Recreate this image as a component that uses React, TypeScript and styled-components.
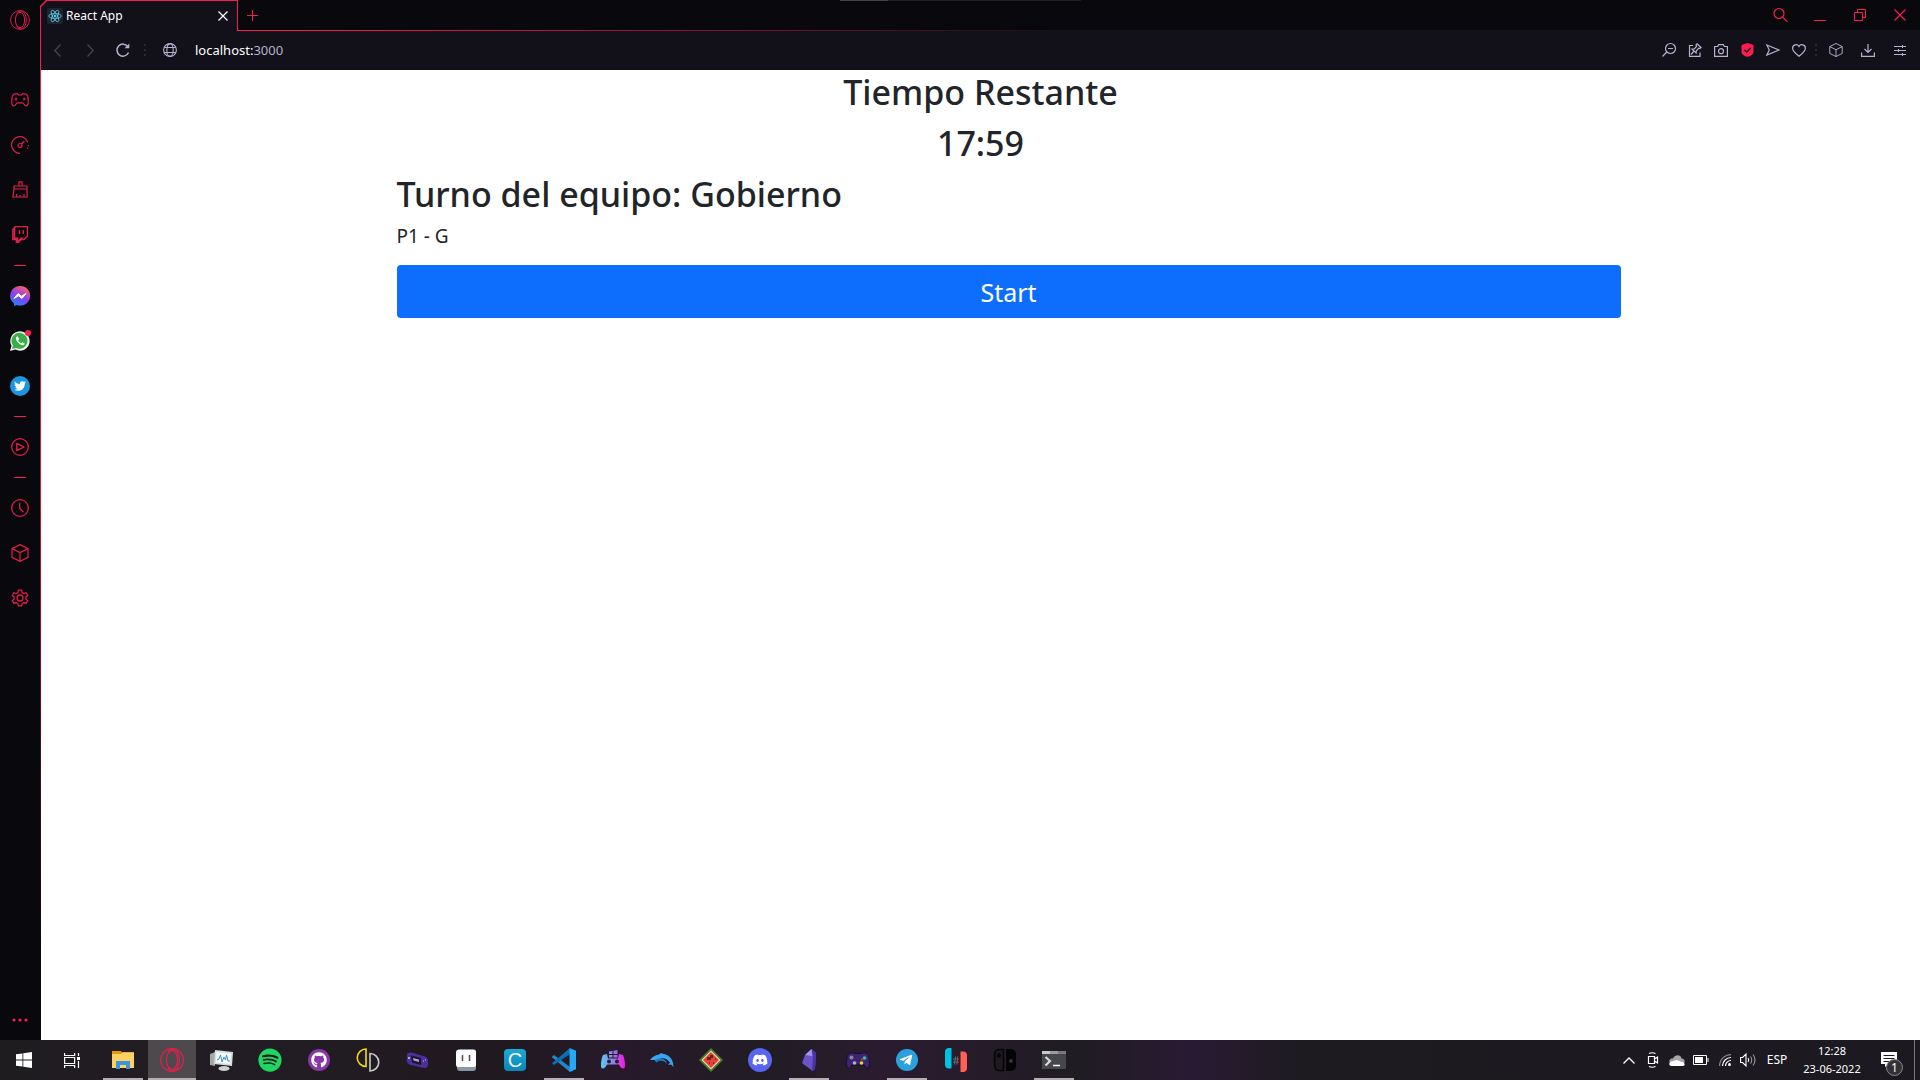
import React from "react";
import styled, { createGlobalStyle, css } from "styled-components";
import {
  FaSpotify,
  FaGithub,
  FaDiscord,
  FaTelegramPlane,
  FaTwitter,
} from "react-icons/fa";

const pink = "#fa1e4e";
const ink = "#09080c";
const panel = "#121019";
const lilac = "#b9b0cf";

const GlobalStyle = createGlobalStyle`
  * { box-sizing: border-box; }
  body { margin: 0; background: #fff; font-family: "Noto Sans", "Open Sans", sans-serif; }
  button, input { font-family: inherit; }
  svg { display: block; flex: none; overflow: visible; }
`;

const Desktop = styled.div`
  display: flex;
  flex-direction: column;
  min-height: 100vh;
`;

const Browser = styled.div`
  display: flex;
  flex: 1;
`;

const resetButton = css`
  display: flex;
  align-items: center;
  justify-content: center;
  flex: none;
  padding: 0;
  border: 0;
  background: none;
  color: inherit;
`;

/* ---------- sidebar ---------- */

const Sidebar = styled.nav`
  display: flex;
  flex-direction: column;
  width: 40px;
  background: ${ink};
  color: #e01f4a;
`;

const SideItem = styled.button`
  ${resetButton}
  width: 39px;
  height: 45px;
`;

const SideLogo = styled(SideItem)`
  height: 40px;
  margin-bottom: 37px;
`;

const SideMore = styled(SideItem)`
  height: 40px;
  margin-top: auto;
`;

const SideRule = styled.hr`
  width: 12px;
  height: 1px;
  margin: 8px auto 7px 14px;
  border: 0;
  background: ${pink};
`;

const Unread = styled.span`
  position: absolute;
  top: -1px;
  right: -1px;
  width: 6px;
  height: 6px;
  border-radius: 50%;
  background: ${pink};
`;

const Bubble = styled.span<{ $bg: string }>`
  position: relative;
  display: flex;
  align-items: center;
  justify-content: center;
  width: 20px;
  height: 20px;
  border-radius: 50%;
  background: ${(p) => p.$bg};
  color: #fff;
`;

/* ---------- browser window ---------- */

const Main = styled.div`
  display: flex;
  flex: 1;
  flex-direction: column;
  min-width: 0;
`;

const TabStrip = styled.header`
  position: relative;
  display: flex;
  height: 31px;
  background: ${ink};
`;

const TabFrame = styled.div`
  width: 198px;
  padding: 1px 1px 0;
  background: ${pink};
  clip-path: polygon(6px 0, 100% 0, 100% 100%, 0 100%, 0 6px);
`;

const Tab = styled.div`
  display: flex;
  align-items: center;
  gap: 3px;
  height: 30px;
  padding: 0 6px;
  background: ${panel};
  clip-path: polygon(6px 0, 100% 0, 100% 100%, 0 100%, 0 6px);
  color: #fff;
  font-size: 12px;
  line-height: 16px;
`;

const Favicon = styled.span`
  display: flex;
  align-items: center;
  justify-content: center;
  width: 16px;
  height: 16px;
  border-radius: 2px;
  background: #20232a;
`;

const TabTitle = styled.span`
  flex: 1;
`;

const IconButton = styled.button<{ $w?: number }>`
  ${resetButton}
  width: ${(p) => p.$w ?? 16}px;
  height: 30px;
`;

const StripRest = styled.div`
  display: flex;
  flex: 1;
  justify-content: space-between;
  padding-left: 5px;
  border-style: solid;
  border-width: 0 0 1px;
  border-image: linear-gradient(90deg, ${pink} 0, ${pink} 40px, ${panel} 50%) 1;
  color: ${pink};
`;

const Controls = styled.div`
  display: flex;
`;

const MediaBar = styled.span`
  position: absolute;
  top: 0;
  left: 50%;
  width: 241px;
  height: 1px;
  margin-left: -140px;
  background: linear-gradient(90deg, #444 48px, #1e1e1e 48px);
`;

const Body = styled.div`
  display: flex;
  flex: 1;
  flex-direction: column;
  border-style: solid;
  border-width: 0 0 0 1px;
  border-image: linear-gradient(180deg, ${pink} 0, #d01a42 45%, #540d20 70%, ${ink} 92%) 1;
`;

const Toolbar = styled.div`
  display: flex;
  align-items: center;
  height: 39px;
  padding: 0 3px 1px 0;
  background: ${panel};
  color: ${lilac};
`;

const Address = styled.label`
  display: flex;
  flex: 1;
  align-items: center;
  gap: 18px;
  padding-left: 17px;
`;

const UrlField = styled.span`
  display: grid;
  flex: 1;
  font-size: 13px;
  line-height: 20px;

  > * { grid-area: 1 / 1; }
`;

const UrlText = styled.span`
  color: ${lilac};
  pointer-events: none;
`;

const Host = styled.span`
  color: #fff;
`;

const UrlInput = styled.input`
  width: 100%;
  padding: 0;
  border: 0;
  outline: 0;
  background: none;
  color: ${lilac};
  font-size: 13px;
`;

const Dots = styled.span<{ $m: string }>`
  width: 2px;
  height: 12px;
  margin: ${(p) => p.$m};
  background: repeating-linear-gradient(#2b2740 0 2px, transparent 2px 5px);
`;

/* ---------- page ---------- */

const Page = styled.main`
  flex: 1;
  background: #fff;
  color: #212529;
`;

const Heading = styled.h2<{ $center?: boolean }>`
  margin: 0 0 6px;
  font-size: 34px;
  font-weight: 500;
  line-height: 45px;
  text-align: ${(p) => (p.$center ? "center" : "left")};
`;

const Container = styled.section`
  max-width: 1320px;
  margin: 0 auto;
  padding: 0 20px 0 76px;
`;

const Speaker = styled.p`
  margin: 0 0 16px;
  font-size: 19px;
  line-height: 26px;
`;

const StartButton = styled.button`
  width: 100%;
  height: 53px;
  padding: 1px 0 0;
  border: 0;
  border-radius: 4px;
  background: #0d6efd;
  color: #fff;
  font-size: 25px;
  line-height: 52px;
`;

/* ---------- taskbar ---------- */

const Taskbar = styled.footer`
  display: flex;
  height: 40px;
  background: linear-gradient(90deg, #1f1c20 0, #221d24 12%, #20191f 26%, #271a2b 32%, #211c24 40%, #2b1b30 46%, #1f1c22 56%, #291a33 62%, #1d1b20 68%, #1c1a20 100%);
  color: #fff;
`;

const Pins = styled.div`
  display: flex;
  gap: 1px;
  margin-left: 3px;
`;

const Task = styled.button<{ $open?: boolean; $active?: boolean }>`
  ${resetButton}
  position: relative;
  width: 48px;
  height: 40px;
  background: ${(p) => (p.$active ? "#4d494d" : "none")};

  &::after {
    content: "";
    position: absolute;
    bottom: 0;
    left: ${(p) => (p.$active ? 0 : 4)}px;
    right: ${(p) => (p.$active ? 0 : 4)}px;
    height: 2px;
    background: ${(p) => (p.$open || p.$active ? "#b5afb4" : "none")};
  }
`;

const CTile = styled.span`
  width: 22px;
  height: 22px;
  border-radius: 4px;
  background: linear-gradient(#1ba9d8, #0a86b8);
  color: #f2f2f2;
  font: 500 20px/22px "Liberation Sans", sans-serif;
  text-align: center;
`;

const Tray = styled.div`
  display: flex;
  align-items: center;
  margin-left: auto;
  font-size: 11px;
  line-height: 18px;
`;

const TrayButton = styled.button<{ $w?: number }>`
  ${resetButton}
  width: ${(p) => p.$w ?? 24}px;
  height: 40px;
  font-size: 12px;
  line-height: 18px;
`;

const Clock = styled.time`
  width: 74px;
  text-align: center;
`;

const NoticeWrap = styled(TrayButton)`
  position: relative;
`;

const Count = styled.span`
  position: absolute;
  top: 19px;
  left: 17px;
  width: 17px;
  height: 17px;
  border: 1px solid #8b898c;
  border-radius: 50%;
  background: #333135;
  color: #fff;
  font-size: 12px;
  line-height: 15px;
  text-align: center;
`;

const PeekDesktop = styled.button`
  ${resetButton}
  width: 6px;
  height: 40px;
  margin-left: 5px;
  border-left: 1px solid #77757a;
`;

/* ---------- drawings ---------- */

type LineProps = { w?: number; h?: number; box?: string; sw?: number; color?: string; children: React.ReactNode };

const Line = ({ w = 18, h = w, box, sw = 1, color = "currentColor", children }: LineProps) => (
  <svg width={w} height={h} viewBox={box ?? `0 0 ${w} ${h}`} fill="none" stroke={color} strokeWidth={sw} aria-hidden="true">
    {children}
  </svg>
);

const Opera = ({ size, color = "currentColor" }: { size: number; color?: string }) => (
  <Line w={size} box="0 0 20 20" color={color} sw={1}>
    <circle cx="10" cy="10" r="9.4" />
    <ellipse cx="10" cy="10" rx="4.6" ry="7.8" />
    <path d="M6.500 3.500C8.500.3 12.500.5 14.500 3.500c2.300 3.500 2.300 9.500 0 13-2 3-6 3.200-8 0" />
  </Line>
);

const Cube = ({ size }: { size: number }) => (
  <Line w={size} box="0 0 18 18" sw={1.2}>
    <path d="M9 .6 17 4.600v8.800l-8 4-8-4V4.600ZM1 4.600l8 4 8-4M9 8.600v8.800" />
  </Line>
);

const Search = () => (
  <Line w={15} sw={1.2}>
    <circle cx="6" cy="5.500" r="5" />
    <path d="m9.800 9.300 4.500 4.500" />
  </Line>
);

const ReactLogo = () => (
  <Line w={14} box="-7 -7 14 14" sw={0.8} color="#5ccfee">
    <ellipse rx="6.400" ry="2.400" />
    <ellipse rx="6.400" ry="2.400" transform="rotate(60)" />
    <ellipse rx="6.400" ry="2.400" transform="rotate(120)" />
    <circle r="1" fill="#5ccfee" />
  </Line>
);

const Globe = () => (
  <Line w={14} sw={1.1}>
    <circle cx="7" cy="7" r="6.400" />
    <ellipse cx="7" cy="7" rx="3.200" ry="6.400" />
    <path d="M1.400 4.500h11.200M1.400 9.500h11.200" />
  </Line>
);

const Gear = () => (
  <Line w={18} box="0 0 24 24" sw={1.7}>
    <circle cx="12" cy="12" r="4" />
    <path d="M9.800 1.500h4.400l.6 3.200 2.200 1.300 3.100-1.100 2.200 3.800-2.500 2.100v2.500l2.500 2.100-2.200 3.800-3.100-1.100-2.200 1.300-.6 3.200H9.800l-.6-3.200L7 18.100l-3.100 1.100-2.200-3.800 2.500-2.100v-2.500L1.700 8.700l2.200-3.800L7 6l2.200-1.300Z" />
  </Line>
);

const sideTop = [
  { label: "GX Corner", icon: (
    <Line w={18} h={14} sw={1.2}>
      <path d="M4 .8h2.500l1 1.200h3l1-1.200H14c2 0 3.300 3 3.300 7.500 0 3-.5 4.700-2.200 4.700-1.700 0-2.300-3.200-3.600-3.200h-5C5.200 9.800 4.600 13 2.900 13 1.200 13 .7 11.300.7 8.300.7 3.800 2 .8 4 .8Z" />
      <path d="M3.500 6h3M5 4.500v3M12 6h2.500M13.200 4.800v2.400" />
    </Line>) },
  { label: "GX Control", icon: (
    <Line w={18} sw={1.2}>
      <path d="M9 17.300A8.300 8.300 0 1 1 16.800 6.500" />
      <path d="M17.300 9a8 8 0 0 1-1 4" strokeDasharray="1.300 1.300" />
      <circle cx="9" cy="9.500" r="2" />
      <path d="m10.500 8 2.800-3" />
    </Line>) },
  { label: "GX Cleaner", icon: (
    <Line w={16} h={17} sw={1.2}>
      <path d="M7 5V.8h3V5M2 5h13v3H2ZM2 8 .8 16h14.400L15 8M4.500 16v-3M8 16v-2M12 16v-3" />
    </Line>) },
  { label: "Twitch", icon: (
    <Line w={16} h={17} sw={1.300}>
      <path d="M3.200.7h12.200v9.500l-3.400 3.300H9l-2.500 2.800H4.300v-2.800H.8V3.200Z" />
      <path d="M1.300 3.200 3.300 1v10.500h3v2.800l2.500-2.800H12l-3 2.200-2.500 2.600H4.300v-2.800h-3Z" fill="currentColor" stroke="none" />
      <path d="M7.500 4v4M11.300 4v4" />
    </Line>) },
];

const sideBottom = [
  { label: "History", icon: (
    <Line w={18} sw={1.300}>
      <circle cx="9" cy="9" r="8.300" />
      <path d="M8.700 4v5.300l3.600 3.700" />
    </Line>) },
  { label: "Extensions", icon: <Cube size={18} /> },
  { label: "Settings", icon: <Gear /> },
];

const toolIcons = [
  { label: "Zoom", w: 26, icon: (
    <Line w={14} sw={1.200}>
      <circle cx="8.500" cy="5.500" r="5" />
      <path d="M4.800 9 .5 13.500M6 5.500h5" />
    </Line>) },
  { label: "Edit page", w: 26, icon: (
    <Line w={14} sw={1.200}>
      <path d="M5 2.500H1.500v10.800h10.500V9.500M9 .8l4 3.700-1.200 1-1-.3-2.500 2.600-.2 2.200L4 6.200l2.200-.3L8.600 3.400 8 2ZM6 8l-3 3.500" />
    </Line>) },
  { label: "Snapshot", w: 26, icon: (
    <Line w={14} h={13} sw={1.200}>
      <path d="M.6 2.500h3L4.700.7h4.600l1.100 1.800h3v9.800H.6Z" />
      <circle cx="7" cy="7.200" r="2.500" />
    </Line>) },
  { label: "Ad blocker", w: 26, icon: (
    <svg width="13" height="14" viewBox="0 0 13 14" aria-hidden="true">
      <path d="M6.500 0 12.500 2v7c0 2.500-3 4-6 5-3-1-6-2.500-6-5V2Z" fill={pink} />
      <path d="m3.500 6.800 2.200 2.200 4-4" fill="none" stroke={panel} strokeWidth="1.400" />
    </svg>) },
  { label: "Flow", w: 26, icon: (
    <Line w={14} h={12} sw={1.200}>
      <path d="M.8 1 13 6 .8 11l2.500-5Z" />
    </Line>) },
  { label: "Bookmark", w: 26, icon: (
    <Line w={14} h={13} sw={1.200}>
      <path d="M7 12.200C2.500 8.800.6 6.600.6 4.200.6.500 5.300-.5 7 2.500 8.700-.5 13.400.5 13.400 4.200c0 2.400-1.900 4.600-6.400 8Z" />
    </Line>) },
];

const pins: { label: string; open?: boolean; active?: boolean; icon: React.ReactNode }[] = [
  { label: "File Explorer", open: true, icon: (
    <svg width="22" height="18" viewBox="0 0 22 18" aria-hidden="true">
      <path d="M0 0h9l1 1.500h12V17H0Z" fill="#e09a0c" />
      <path d="M0 3h9l1.500-1.800H22V17H0Z" fill="#fdd262" />
      <path d="M4 18v-8h14v8h-4v-4H8v4Z" fill="#3b97dd" />
    </svg>) },
  { label: "Opera GX", active: true, icon: <Opera size={24} color="#e0204c" /> },
  { label: "Resource Monitor", icon: (
    <svg width="23" height="21" viewBox="0 0 23 21" aria-hidden="true">
      <path d="M0 4 5 2v14l-5-1Z" fill="#a5a7a5" />
      <path d="m5 0 18 2-1 14L4 14Z" fill="#d9dcdd" />
      <path d="m6.500 2 14.500 1.500-.8 10.500L6 12.500Z" fill="#f5fafc" />
      <path d="m7 10 2-1 1.500-4 1.500 7 2-5 1.500 3 1-5 1.500 6 2 0" fill="none" stroke="#3a94cc" strokeWidth="1" />
      <ellipse cx="14" cy="18.500" rx="5.500" ry="2.500" fill="#cfd0cd" />
      <path d="M1 6h2" stroke="#5fd35f" />
    </svg>) },
  { label: "Spotify", icon: <FaSpotify size={24} color="#1ed760" /> },
  { label: "GitHub Desktop", icon: (
    <svg width="22" height="22" viewBox="0 0 22 22" aria-hidden="true">
      <circle cx="11" cy="11" r="11" fill="#8a35a8" />
      <FaGithub x="3" y="3" size={16} color="#fff" />
    </svg>) },
  { label: "yuzu", icon: (
    <Line w={22} h={24} sw={1.600}>
      <path d="M9 1v17.500A8.700 8.700 0 0 1 9 1Z" stroke="#f3dc0c" />
      <path d="M13 5.500V23a8.700 8.700 0 0 0 0-17.500Z" stroke="#c9c9c9" />
    </Line>) },
  { label: "GBA emulator", icon: (
    <svg width="22" height="17" viewBox="0 0 22 17" aria-hidden="true">
      <path d="M1 2Q3-.5 7 1l12 3.500q3 1 3 4v5q-1 3-4 2.500L5 13Q1 12 .8 9Z" fill="#4b2f9c" />
      <path d="m5 3.500 10 2.500v7L6 10.500Z" fill="#17142c" />
      <path d="m7 6 6 1.500v2.500L7.500 8.500Z" fill="#a9a4cc" />
      <path d="M2 6h2M3 5v2M17 9h1M19 8h1" stroke="#d0cae8" />
    </svg>) },
  { label: "Hollow game", icon: (
    <svg width="21" height="22" viewBox="0 0 21 22" aria-hidden="true">
      <rect x="1" y="0" width="19" height="22" rx="3" fill="#8798a5" />
      <rect x="0" y="1" width="20" height="17" rx="2" fill="#fff" />
      <path d="M6.500 6v6M13.500 6v6" stroke="#5a4550" strokeWidth="1.500" />
    </svg>) },
  { label: "Cemu", icon: <CTile>C</CTile> },
  { label: "Visual Studio Code", open: true, icon: (
    <svg width="24" height="24" viewBox="0 0 24 24" aria-hidden="true">
      <path d="M0 8.800 2 7l16 12v5L.2 9.600Z" fill="#1e88cf" />
      <path d="M18 0v6L2 17l-2-1.800Z" fill="#0a6fb5" />
      <path d="M17.500 0 24 2.800v18.400L17.500 24Z" fill="#27a8f2" />
    </svg>) },
  { label: "Game controller mapper", icon: (
    <svg width="24" height="20" viewBox="0 0 24 20" aria-hidden="true">
      <defs>
        <linearGradient id="pad" gradientUnits="userSpaceOnUse" x1="0" x2="24" y1="0" y2="0">
          <stop offset="0" stopColor="#5cc8ee" />
          <stop offset=".5" stopColor="#9082e6" />
          <stop offset="1" stopColor="#ff10e8" />
        </linearGradient>
      </defs>
      <path d="M8 1.500 11.500 1v3H8ZM12.500.8l4-.8v4h-4ZM8 5h3.500v2.500H8ZM12.500 5h4v2.500h-4ZM2 5l4-1 1 4.500h10L18 4l4 1c1.500 3 2 7 2 11 0 4-4 3-6-1.500H6c-2 4.500-6 5.500-6 1.500C0 12 .5 8 2 5Z" fill="url(#pad)" />
      <circle cx="8" cy="11.500" r="2" fill="#271d2b" />
      <circle cx="16" cy="11.500" r="2" fill="#271d2b" />
    </svg>) },
  { label: "Dolphin", icon: (
    <svg width="24" height="15" viewBox="0 0 24 15" aria-hidden="true">
      <path d="M0 7c3-4 6-5 9-5.500L11 0l2.500 1C18 1.500 22 5 23 10l.5 4-2.500-2.500-3 .5 2-2.200C17 5.500 13 4.500 9 6L6 8.500 5 7Z" fill="#38a5ec" />
      <path d="M5 7c4-2 8-2 11 1l1 3c-2-3-5-4-8-3L6 9.500Z" fill="#1c79c8" />
    </svg>) },
  { label: "melonDS", icon: (
    <svg width="24" height="24" viewBox="0 0 24 24" aria-hidden="true">
      <path d="M12 0 24 12 12 24 0 12Z" fill="#4f7a2c" />
      <path d="M12 2.500 21.500 12 12 21.500 2.500 12Z" fill="#e6e3b4" />
      <path d="M12 4 20 12l-8 8-8-8Z" fill="#e5423c" />
      <path d="M8 9h3V7h3v3h-2v2H8Z" fill="#6d1f1c" />
      <path d="M10 15h1M14 15h1M16 11h1" stroke="#6d1f1c" strokeWidth="1.500" />
    </svg>) },
  { label: "Discord", icon: (
    <svg width="24" height="24" viewBox="0 0 24 24" aria-hidden="true">
      <circle cx="12" cy="12" r="12" fill="#5865f2" />
      <FaDiscord x="4" y="4" size={16} color="#fff" />
    </svg>) },
  { label: "Obsidian", open: true, icon: (
    <svg width="14" height="22" viewBox="0 0 14 22" aria-hidden="true">
      <path d="m9.500 0 4.500 4-1 16-2.500 2L0 14 3 6Z" fill="#6b54c8" />
      <path d="m9.500 0 1.500 7-1 15 3-2 1-16Z" fill="#4a34a0" />
      <path d="m9.500 0 .8 7L3 6Z" fill="#a396ec" />
    </svg>) },
  { label: "GameCube controller", icon: (
    <svg width="24" height="17" viewBox="0 0 24 17" aria-hidden="true">
      <path d="M3 1.500Q6-.5 9 1.500h6q3-2 6 0c2 2 2.500 6 2.500 10 0 6-4 6-5 1.500H5.500c-1 4.500-5 4.500-5-1.500 0-4 .5-8 2.500-10Z" fill="#3b2470" stroke="#17102a" />
      <circle cx="5.500" cy="5.500" r="2" fill="#8d86a0" />
      <circle cx="8.500" cy="11" r="1.800" fill="#b6b2c0" />
      <circle cx="15.500" cy="11" r="1.800" fill="#f2d21b" />
      <circle cx="18.500" cy="6" r="1.800" fill="#27c8a5" />
      <circle cx="16" cy="7.500" r="1" fill="#e5394a" />
    </svg>) },
  { label: "Telegram", open: true, icon: (
    <svg width="22" height="22" viewBox="0 0 22 22" aria-hidden="true">
      <circle cx="11" cy="11" r="11" fill="#2ba0dc" />
      <FaTelegramPlane x="3" y="4" size={14} color="#fff" />
    </svg>) },
  { label: "Ryujinx", icon: (
    <svg width="22" height="24" viewBox="0 0 22 24" aria-hidden="true">
      <path d="M6.500 0v20.500H4a4 4 0 0 1-4-4V4a4 4 0 0 1 4-4Z" fill="#00c3e3" />
      <path d="M15.500 3.500H18a4 4 0 0 1 4 4V20a4 4 0 0 1-4 4h-2.500Z" fill="#ff5f55" />
      <path d="m10.500 8.500-1 8M8 11h3.500M8 14h3" stroke="#2d8496" />
      <path d="m12.800 8.500-1 8M11.500 11H14M11 14h3" stroke="#a1504c" />
    </svg>) },
  { label: "Switch emulator", icon: (
    <svg width="22" height="22" viewBox="0 0 22 22" aria-hidden="true">
      <path d="M9.500.6v20.800H5a4.400 4.400 0 0 1-4.400-4.400V5A4.400 4.400 0 0 1 5 .6Z" fill="#1d1a1f" stroke="#050505" strokeWidth="1.500" />
      <path d="M12 0h5a5 5 0 0 1 5 5v12a5 5 0 0 1-5 5h-5Z" fill="#040404" />
      <circle cx="5" cy="6.500" r="2" fill="#050505" />
      <circle cx="17" cy="12" r="2" fill="#37343a" />
    </svg>) },
  { label: "Terminal", open: true, icon: (
    <svg width="24" height="18" viewBox="0 0 24 18" aria-hidden="true">
      <path d="M0 0h24v18H0Z" fill="#45474a" />
      <path d="M0 0h8v3H0Z" fill="#c9c9c9" />
      <path d="M8 0h8v3H8Z" fill="#9b9b9b" />
      <path d="M16 0h8v3h-8Z" fill="#77797b" />
      <path d="m3.500 6 4.500 4-4.500 4.500" fill="none" stroke="#d9d9d9" strokeWidth="2.200" />
      <path d="M11 14.500h7" stroke="#fff" strokeWidth="1.500" />
    </svg>) },
];

export default function App() {
  return (
    <Desktop>
      <GlobalStyle />
      <Browser>
        <Sidebar aria-label="Sidebar">
          <SideLogo aria-label="Opera menu"><Opera size={20} /></SideLogo>
          {sideTop.map((s) => <SideItem key={s.label} aria-label={s.label}>{s.icon}</SideItem>)}
          <SideRule />
          <SideItem aria-label="Messenger">
            <svg width="20" height="20" viewBox="0 0 20 20" aria-hidden="true">
              <defs>
                <linearGradient id="msg" x1=".2" y1="1" x2=".7" y2="0">
                  <stop offset="0" stopColor="#1588ff" />
                  <stop offset=".5" stopColor="#8b3df5" />
                  <stop offset="1" stopColor="#ff6260" />
                </linearGradient>
              </defs>
              <path d="M10 0a9.800 9.800 0 1 1-3 19l-3 1v-2.500A9.800 9.800 0 0 1 10 0Z" fill="url(#msg)" />
              <path d="m4 12.500 4-5 3.500 2.700L16 7.500l-4 5-3.500-2.700Z" fill="#fff" stroke="#fff" strokeLinejoin="round" />
            </svg>
          </SideItem>
          <SideItem aria-label="WhatsApp">
            <Bubble $bg="none">
              <svg width="20" height="20" viewBox="0 0 20 20" aria-hidden="true">
                <path d="m0 20 1.500-5.200A9.700 9.700 0 1 1 5.400 18.600Z" fill="#eee" />
                <path d="m2 18 1-3.500A8 8 0 1 1 6 17Z" fill="#37b04a" />
                <path d="M7.500 5.200 6 6.300c-.8 3.500 4 8.500 7.500 8l1.300-1.600-2.400-1.500-1.200 1c-1.500-.6-2.500-1.700-3-3l1-1.200Z" fill="#fff" />
              </svg>
              <Unread />
            </Bubble>
          </SideItem>
          <SideItem aria-label="Twitter"><Bubble $bg="#1b95e0"><FaTwitter size={12} /></Bubble></SideItem>
          <SideRule />
          <SideItem aria-label="Player">
            <Line w={18} sw={1.300}>
              <circle cx="9" cy="9" r="8.300" />
              <path d="M5.800 5.300 13 9l-7.200 3.700Z" strokeLinejoin="round" />
            </Line>
          </SideItem>
          <SideRule />
          {sideBottom.map((s) => <SideItem key={s.label} aria-label={s.label}>{s.icon}</SideItem>)}
          <SideMore aria-label="More">
            <svg width="16" height="4" viewBox="0 0 16 4" fill={pink} aria-hidden="true">
              <circle cx="2" cy="2" r="1.600" /><circle cx="8" cy="2" r="1.600" /><circle cx="14" cy="2" r="1.600" />
            </svg>
          </SideMore>
        </Sidebar>

        <Main>
          <TabStrip>
            <TabFrame>
              <Tab>
                <Favicon><ReactLogo /></Favicon>
                <TabTitle>React App</TabTitle>
                <IconButton aria-label="Close tab">
                  <Line w={10} sw={1.300}><path d="m.5.5 9 9M9.500.5l-9 9" /></Line>
                </IconButton>
              </Tab>
            </TabFrame>
            <StripRest>
              <IconButton aria-label="New tab" $w={18}>
                <Line w={11}><path d="M5.500 0v11M0 5.500h11" /></Line>
              </IconButton>
              <Controls>
                <IconButton aria-label="Search tabs" $w={40}><Search /></IconButton>
                <IconButton aria-label="Minimize" $w={40}><Line w={12}><path d="M0 11.500h12" /></Line></IconButton>
                <IconButton aria-label="Restore" $w={40}>
                  <Line w={12}><path d="M.5 3.500h8v8h-8ZM3.500 3.500v-3h8v8h-3" /></Line>
                </IconButton>
                <IconButton aria-label="Close" $w={40}>
                  <Line w={12} sw={1.200}><path d="m.5.5 11 11M11.500.5l-11 11" /></Line>
                </IconButton>
              </Controls>
            </StripRest>
            <MediaBar />
          </TabStrip>

          <Body>
            <Toolbar>
              <IconButton aria-label="Back" $w={33}><Line w={7} h={13} color="#4a4658" sw={1.200}><path d="M6.500.5.8 6.500l5.700 6" /></Line></IconButton>
              <IconButton aria-label="Forward" $w={33}><Line w={7} h={13} color="#4a4658" sw={1.200}><path d="m.5.5 5.700 6-5.700 6" /></Line></IconButton>
              <IconButton aria-label="Reload" $w={32}>
                <Line w={14} sw={1.500}>
                  <path d="M12.500 9.500A6 6 0 1 1 12 3.800" />
                  <path d="M13.300.5v4.800H8.500Z" fill="currentColor" stroke="none" />
                </Line>
              </IconButton>
              <Dots $m="0 0 0 5px" />
              <Address>
                <Globe />
                <UrlField>
                  <UrlText><Host>localhost:</Host>3000</UrlText>
                  <UrlInput aria-label="Address" />
                </UrlField>
              </Address>
              {toolIcons.map((t) => <IconButton key={t.label} aria-label={t.label} $w={t.w}>{t.icon}</IconButton>)}
              <Dots $m="0 2px 0 3px" />
              <IconButton aria-label="Extensions" $w={34}><Cube size={14} /></IconButton>
              <IconButton aria-label="Downloads" $w={30}>
                <Line w={14} h={13} sw={1.200}><path d="M7 0v8.500M3.500 5 7 8.500 10.500 5M.6 8.500v3.800h12.800V8.500" /></Line>
              </IconButton>
              <IconButton aria-label="Easy setup" $w={34}>
                <Line w={12} h={11}><path d="M0 1.500h12M0 5.500h12M0 9.500h12M8.500 0v3M4.500 4v3M8.500 8v3" /></Line>
              </IconButton>
            </Toolbar>

            <Page>
              <Heading $center>Tiempo Restante</Heading>
              <Heading $center>17:59</Heading>
              <Container>
                <Heading>Turno del equipo: Gobierno</Heading>
                <Speaker>P1 - G</Speaker>
                <StartButton>Start</StartButton>
              </Container>
            </Page>
          </Body>
        </Main>
      </Browser>

      <Taskbar>
        <Task aria-label="Start menu">
          <svg width="16" height="16" viewBox="0 0 16 16" fill="#fff" aria-hidden="true">
            <path d="M0 2.300 6.500 1.400v6.200H0ZM7.300 1.200 16 0v7.600H7.300ZM0 8.400h6.500v6.200L0 13.700ZM7.300 8.400H16V16l-8.700-1.200Z" />
          </svg>
        </Task>
        <Task aria-label="Task view">
          <Line w={16} h={15} sw={1.200}>
            <path d="M.6 0v2.500h10V0M.6 15v-2.500h10V15M.6 4.500h10v6H.6ZM14.500 0v3M14.500 8v7" />
            <path d="M13 4h3v3h-3Z" fill="#fff" stroke="none" />
          </Line>
        </Task>
        <Pins>
          {pins.map((p) => <Task key={p.label} aria-label={p.label} $open={p.open} $active={p.active}>{p.icon}</Task>)}
        </Pins>
        <Tray>
          <TrayButton aria-label="Hidden icons"><Line w={12} h={7} sw={1.300}><path d="M.5 6.500 6 1l5.500 5.500" /></Line></TrayButton>
          <TrayButton aria-label="Camera">
            <Line w={12} h={16} sw={1.200}><path d="M1.500 4.500h6v7h-6ZM7.500 7l3-2v6l-3-2M2 1.500q3-1.500 6.500 0M2 14.500q3 1.500 6.500 0" /></Line>
          </TrayButton>
          <TrayButton aria-label="OneDrive">
            <svg width="16" height="11" viewBox="0 0 16 11" aria-hidden="true">
              <path d="M1 8C-1 5 2 3 4 3.500 6-1 12-.5 12.500 3.500 15 3.500 16 5 15.500 8Z" fill="#a5a4a6" />
              <path d="M2.500 11C-.5 11-.5 7 2.500 6.500L8 5l5 2c3 .5 4 4 .5 4Z" fill="#fff" />
            </svg>
          </TrayButton>
          <TrayButton aria-label="Battery">
            <Line w={16} h={10}><path d="M.5.5h13v9H.5ZM15 3v4" /><path d="M2 2h8v6H2Z" fill="#fff" stroke="none" /></Line>
          </TrayButton>
          <TrayButton aria-label="Network">
            <Line w={12} h={12} sw={1.200}>
              <path d="M.6 12A11.400 11.400 0 0 1 12 .6" stroke="#8a888c" />
              <path d="M3.500 12A8.500 8.500 0 0 1 12 3.500M6.500 12A5.500 5.500 0 0 1 12 6.500" />
              <circle cx="10.500" cy="10.500" r="1.500" fill="#fff" stroke="none" />
            </Line>
          </TrayButton>
          <TrayButton aria-label="Volume" $w={22}>
            <Line w={16} h={14} sw={1.100}>
              <path d="M.6 4.500h2L6 1v12L2.600 9.500h-2ZM8 5q1.500 2 0 4" />
              <path d="M10.500 3.500q2.500 3.500 0 7M13 1.500q4 5.500 0 11" stroke="#99979b" />
            </Line>
          </TrayButton>
          <TrayButton $w={36}>ESP</TrayButton>
          <Clock>12:28<br />23-06-2022</Clock>
          <NoticeWrap $w={40} aria-label="Notifications">
            <svg width="18" height="16" viewBox="0 0 18 16" aria-hidden="true">
              <path d="M1 0h16v12H9l-4 3v-3H1Z" fill="#fff" />
              <path d="M3.500 3.500h11M3.500 6.500h11M3.500 9.500h6" stroke="#1d1b20" />
            </svg>
            <Count>1</Count>
          </NoticeWrap>
          <PeekDesktop aria-label="Show desktop" />
        </Tray>
      </Taskbar>
    </Desktop>
  );
}
